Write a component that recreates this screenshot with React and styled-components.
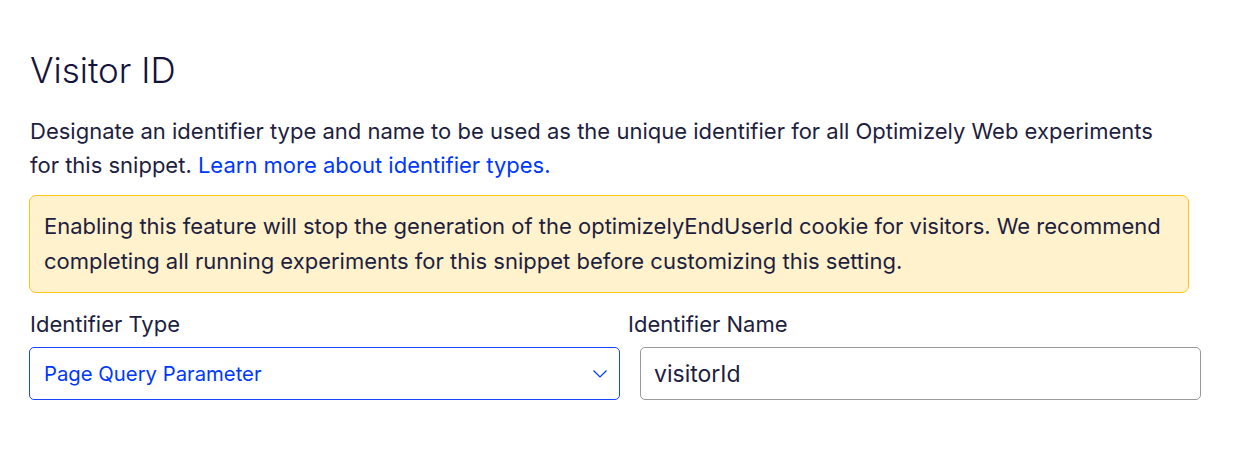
import React from 'react'
import styled, { createGlobalStyle } from 'styled-components'

const GlobalStyle = createGlobalStyle`
    body {
        margin: 0;
        background: #ffffff;
        font-family: Inter, "Noto Sans", sans-serif;
        color: #1a1a3a;
    }
`

const App = () => {
    return (
        <>
            <GlobalStyle />
            <Section>
                <Title>Visitor ID</Title>
                <Description>
                    Designate an identifier type and name to be used as the unique identifier for all Optimizely Web experiments
                    for this snippet. <LearnLink href="#">Learn more about identifier types.</LearnLink>
                </Description>
                <Warning>
                    Enabling this feature will stop the generation of the optimizelyEndUserId cookie for visitors. We recommend
                    completing all running experiments for this snippet before customizing this setting.
                </Warning>
                <Fields>
                    <Field>
                        <Label>Identifier Type</Label>
                        <Select>
                            <SelectValue>Page Query Parameter</SelectValue>
                            <Chevron width="16" height="9" viewBox="0 0 16 9">
                                <path d="M1.5 1.5l6.5 6.5 6.5-6.5" fill="none" stroke="#0037ff" strokeWidth="1.2" />
                            </Chevron>
                        </Select>
                    </Field>
                    <Field>
                        <Label>Identifier Name</Label>
                        <TextInput defaultValue="visitorId" $offset={12} />
                    </Field>
                </Fields>
            </Section>
        </>
    )
}

const Section = styled.div`
    width: 1171px;
    padding: 46px 0 0 30px;
`

const Title = styled.h2`
    margin: 0;
    font-size: 35px;
    font-weight: 300;
    line-height: 48px;
    color: #14143a;
`

const Description = styled.p`
    margin: 20px 0 0;
    font-size: 22px;
    line-height: 34px;
    font-weight: 400;
    color: #1e1e40;
    max-width: 1135px;
`

const LearnLink = styled.a`
    color: #0037ff;
    text-decoration: none;
`

const Warning = styled.div`
    margin: 13px 0 0 -1px;
    width: 1160px;
    box-sizing: border-box;
    padding: 13px 14px;
    background: #fff2cc;
    border: 1px solid #ffc414;
    border-radius: 7px;
    font-size: 22px;
    line-height: 35px;
    color: #1e1e40;
`

const Fields = styled.div`
    display: grid;
    grid-template-columns: 598px 561px;
    margin-top: 16px;
`

const Field = styled.div`
    display: flex;
    flex-direction: column;
`

const Label = styled.label`
    font-size: 22px;
    line-height: 30px;
    color: #1e1e40;
    margin-bottom: 8px;
`

const Select = styled.div`
    width: 591px;
    height: 53px;
    margin-left: -1px;
    box-sizing: border-box;
    display: flex;
    align-items: center;
    justify-content: space-between;
    padding: 0 11px 0 14px;
    border: 1px solid #1a45ff;
    border-radius: 5px;
`

const SelectValue = styled.span`
    font-size: 20.3px;
    color: #0037ff;
`

const Chevron = styled.svg`
    display: block;
`

const TextInput = styled.input`
    width: 561px;
    height: 53px;
    box-sizing: border-box;
    margin-left: ${p => p.$offset}px;
    padding: 0 13px;
    border: 1px solid #9a9a9a;
    border-radius: 5px;
    font-family: Inter, "Noto Sans", sans-serif;
    font-size: 23px;
    color: #1e1e40;
    outline: none;
`

export default App
